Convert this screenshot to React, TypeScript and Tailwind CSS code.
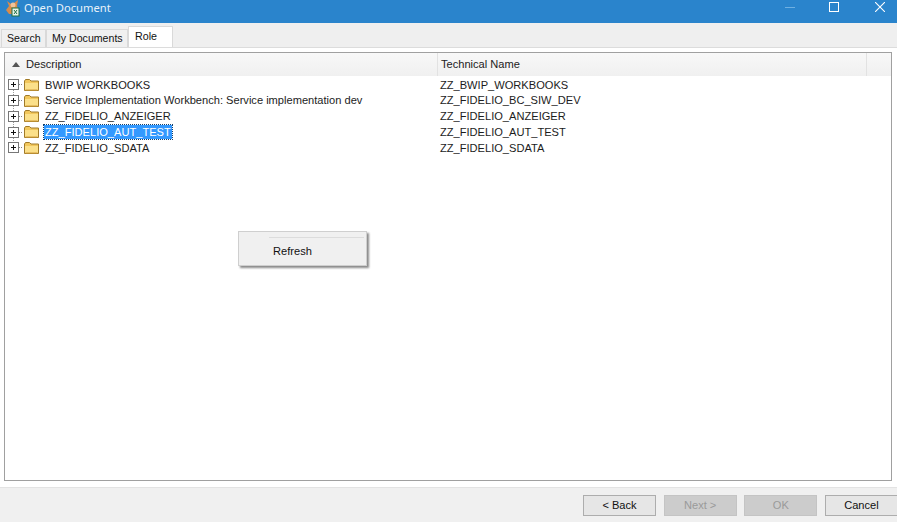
interface Row {
  description: string;
  technical: string;
  selected?: boolean;
}

const rows: Row[] = [
  { description: 'BWIP WORKBOOKS', technical: 'ZZ_BWIP_WORKBOOKS' },
  { description: 'Service Implementation Workbench: Service implementation dev', technical: 'ZZ_FIDELIO_BC_SIW_DEV' },
  { description: 'ZZ_FIDELIO_ANZEIGER', technical: 'ZZ_FIDELIO_ANZEIGER' },
  { description: 'ZZ_FIDELIO_AUT_TEST', technical: 'ZZ_FIDELIO_AUT_TEST', selected: true },
  { description: 'ZZ_FIDELIO_SDATA', technical: 'ZZ_FIDELIO_SDATA' },
];

function AppIcon() {
  return (
    <svg width="18" height="18" viewBox="0 0 18 18" className="ml-[4px] shrink-0">
      <path d="M3 1l4 3 3-1 4-3-1 6 1 3-1 5H5L2 10l3-4z" fill="#d98b4a" />
      <circle cx="9" cy="5" r="2.5" fill="#efc39a" />
      <rect x="8" y="8" width="7" height="8" fill="#e9f3ea" stroke="#1d7044" />
      <path d="M10 10l3 4M13 10l-3 4" stroke="#1d7044" strokeWidth="1" />
    </svg>
  );
}

function Folder() {
  return (
    <svg width="17" height="14" viewBox="0 0 17 14" className="shrink-0">
      <path d="M1.5 12.5V3l1-1.5h4L8 3h7.5v9.5z" fill="#f2c75c" stroke="#a07a28" />
      <path d="M2 5h13v7H2z" fill="#fbe08a" />
      <path d="M2.5 12h12" stroke="#d29f3c" />
    </svg>
  );
}

function Expander() {
  return (
    <svg width="15" height="11" viewBox="0 0 15 11" className="shrink-0">
      <path d="M11 5.5h4" stroke="#8a8a8a" strokeDasharray="1 1" />
      <rect x="0.5" y="0.5" width="10" height="10" fill="#fff" stroke="#777" />
      <path d="M3 5.5h5M5.5 3v5" stroke="#111" />
    </svg>
  );
}

function Tab({ label, active, width }: { label: string; active?: boolean; width: string }) {
  return (
    <div
      className={
        active
          ? `${width} h-[21px] whitespace-nowrap bg-white border border-b-0 border-[#d9d9d9] flex items-start pl-[6px] pt-[1px] text-[10.7px] text-[#111]`
          : `${width} h-[18px] whitespace-nowrap bg-[#f0f0f0] border border-b-0 border-[#d9d9d9] flex items-center pl-[5px] text-[10.6px] text-[#111]`
      }
    >
      {label}
    </div>
  );
}

function FooterButton({ label, disabled }: { label: string; disabled?: boolean }) {
  return (
    <div
      className={
        disabled
          ? 'w-[73px] h-[21px] shrink-0 flex items-center justify-center bg-[#cccccc] text-[#9a9a9a] border border-[#c4c4c4]'
          : 'w-[73px] h-[21px] shrink-0 flex items-center justify-center bg-[#e6e6e6] text-[#111] border border-[#adadad]'
      }
    >
      {label}
    </div>
  );
}

export default function App() {
  return (
    <div className="relative w-[897px] h-[522px] overflow-hidden flex flex-col bg-[#f0f0f0] text-[11.1px] font-['Liberation_Sans',sans-serif]">
      {/* title bar */}
      <div className="h-[23px] bg-[#2a84cc] flex items-start text-white shrink-0">
        <AppIcon />
        <span className="ml-[2px] mt-[-1px] text-[11.2px] leading-[17px] font-['Noto_Sans',sans-serif] text-[#e8f2fa]">Open Document</span>
        <div className="ml-auto flex items-start pt-[2px]">
          <svg width="10" height="10" viewBox="0 0 10 10" className="mr-[34px]">
            <path d="M0 5.5h10" stroke="#6fb0e2" />
          </svg>
          <svg width="10" height="10" viewBox="0 0 10 10" className="mr-[36px]">
            <rect x="0.5" y="0.5" width="9" height="9" fill="none" stroke="#fff" />
          </svg>
          <svg width="10" height="10" viewBox="0 0 10 10" className="mr-[12px]">
            <path d="M0 0l10 10M10 0L0 10" stroke="#fff" strokeWidth="1.1" />
          </svg>
        </div>
      </div>

      {/* tabs */}
      <div className="h-[24px] flex items-end pl-[1px] shrink-0 bg-[#efefef]">
        <Tab label="Search" width="w-[45px]" />
        <Tab label="My Documents" width="w-[82px]" />
        <Tab label="Role" width="w-[45px]" active />
      </div>

      {/* tab panel */}
      <div className="h-[440px] bg-white border-t border-[#dcdcdc] pt-[4px] pl-[4px] pr-[5px] pb-[6px] shrink-0">
        <div className="h-full border border-[#a0a0a0] flex flex-col">
          <div className="h-[23px] flex bg-gradient-to-b from-[#f8f8f8] to-[#f0f0f0] shrink-0">
            <div className="w-[433px] flex items-center border-r border-[#e2e2e2]">
              <svg width="8" height="5" viewBox="0 0 8 5" className="ml-[7px] mr-[6px]">
                <path d="M4 0l4 5H0z" fill="#555" />
              </svg>
              <span className="text-[#222]">Description</span>
            </div>
            <div className="w-[429px] flex items-center pl-[3px] border-r border-[#e2e2e2] text-[#222]">Technical Name</div>
          </div>
          <div className="relative flex-1 pt-[1px]">
            <div className="absolute left-[8px] top-[6px] h-[63px] border-l border-dotted border-[#9a9a9a]" />
            {rows.map(row => (
              <div key={row.technical} className="relative h-[15.75px] flex items-center text-[#1c1c1c]">
                <div className="w-[433px] flex items-center pl-[3px]">
                  <Expander />
                  <Folder />
                  <span
                    className={
                      row.selected
                        ? 'ml-[4px] pl-[1px] pr-[1px] h-[14px] leading-[14px] bg-[#3399ff] text-white outline-1 outline-dotted outline-[#12406e]'
                        : 'ml-[5px]'
                    }
                  >
                    {row.description}
                  </span>
                </div>
                <span className="pl-[2px]">{row.technical}</span>
              </div>
            ))}
          </div>
        </div>
      </div>

      {/* footer */}
      <div className="flex-1 border-t border-[#e3e3e3] flex items-start pl-[583px] pt-[7px] gap-[7.67px]">
        <FooterButton label="< Back" />
        <FooterButton label="Next >" disabled />
        <FooterButton label="OK" disabled />
        <FooterButton label="Cancel" />
      </div>

      {/* context menu */}
      <div className="absolute left-[238px] top-[231px] w-[129px] h-[35px] bg-[#f0f0f0] border border-[#cfcfcf] shadow-[2px_2px_2px_#8a8a8a]">
        <div className="ml-[30px] mr-[2px] mt-[5px] h-px bg-[#dcdcdc]" />
        <div className="pl-[34px] pt-[5px] text-[#111]">Refresh</div>
      </div>
    </div>
  );
}
